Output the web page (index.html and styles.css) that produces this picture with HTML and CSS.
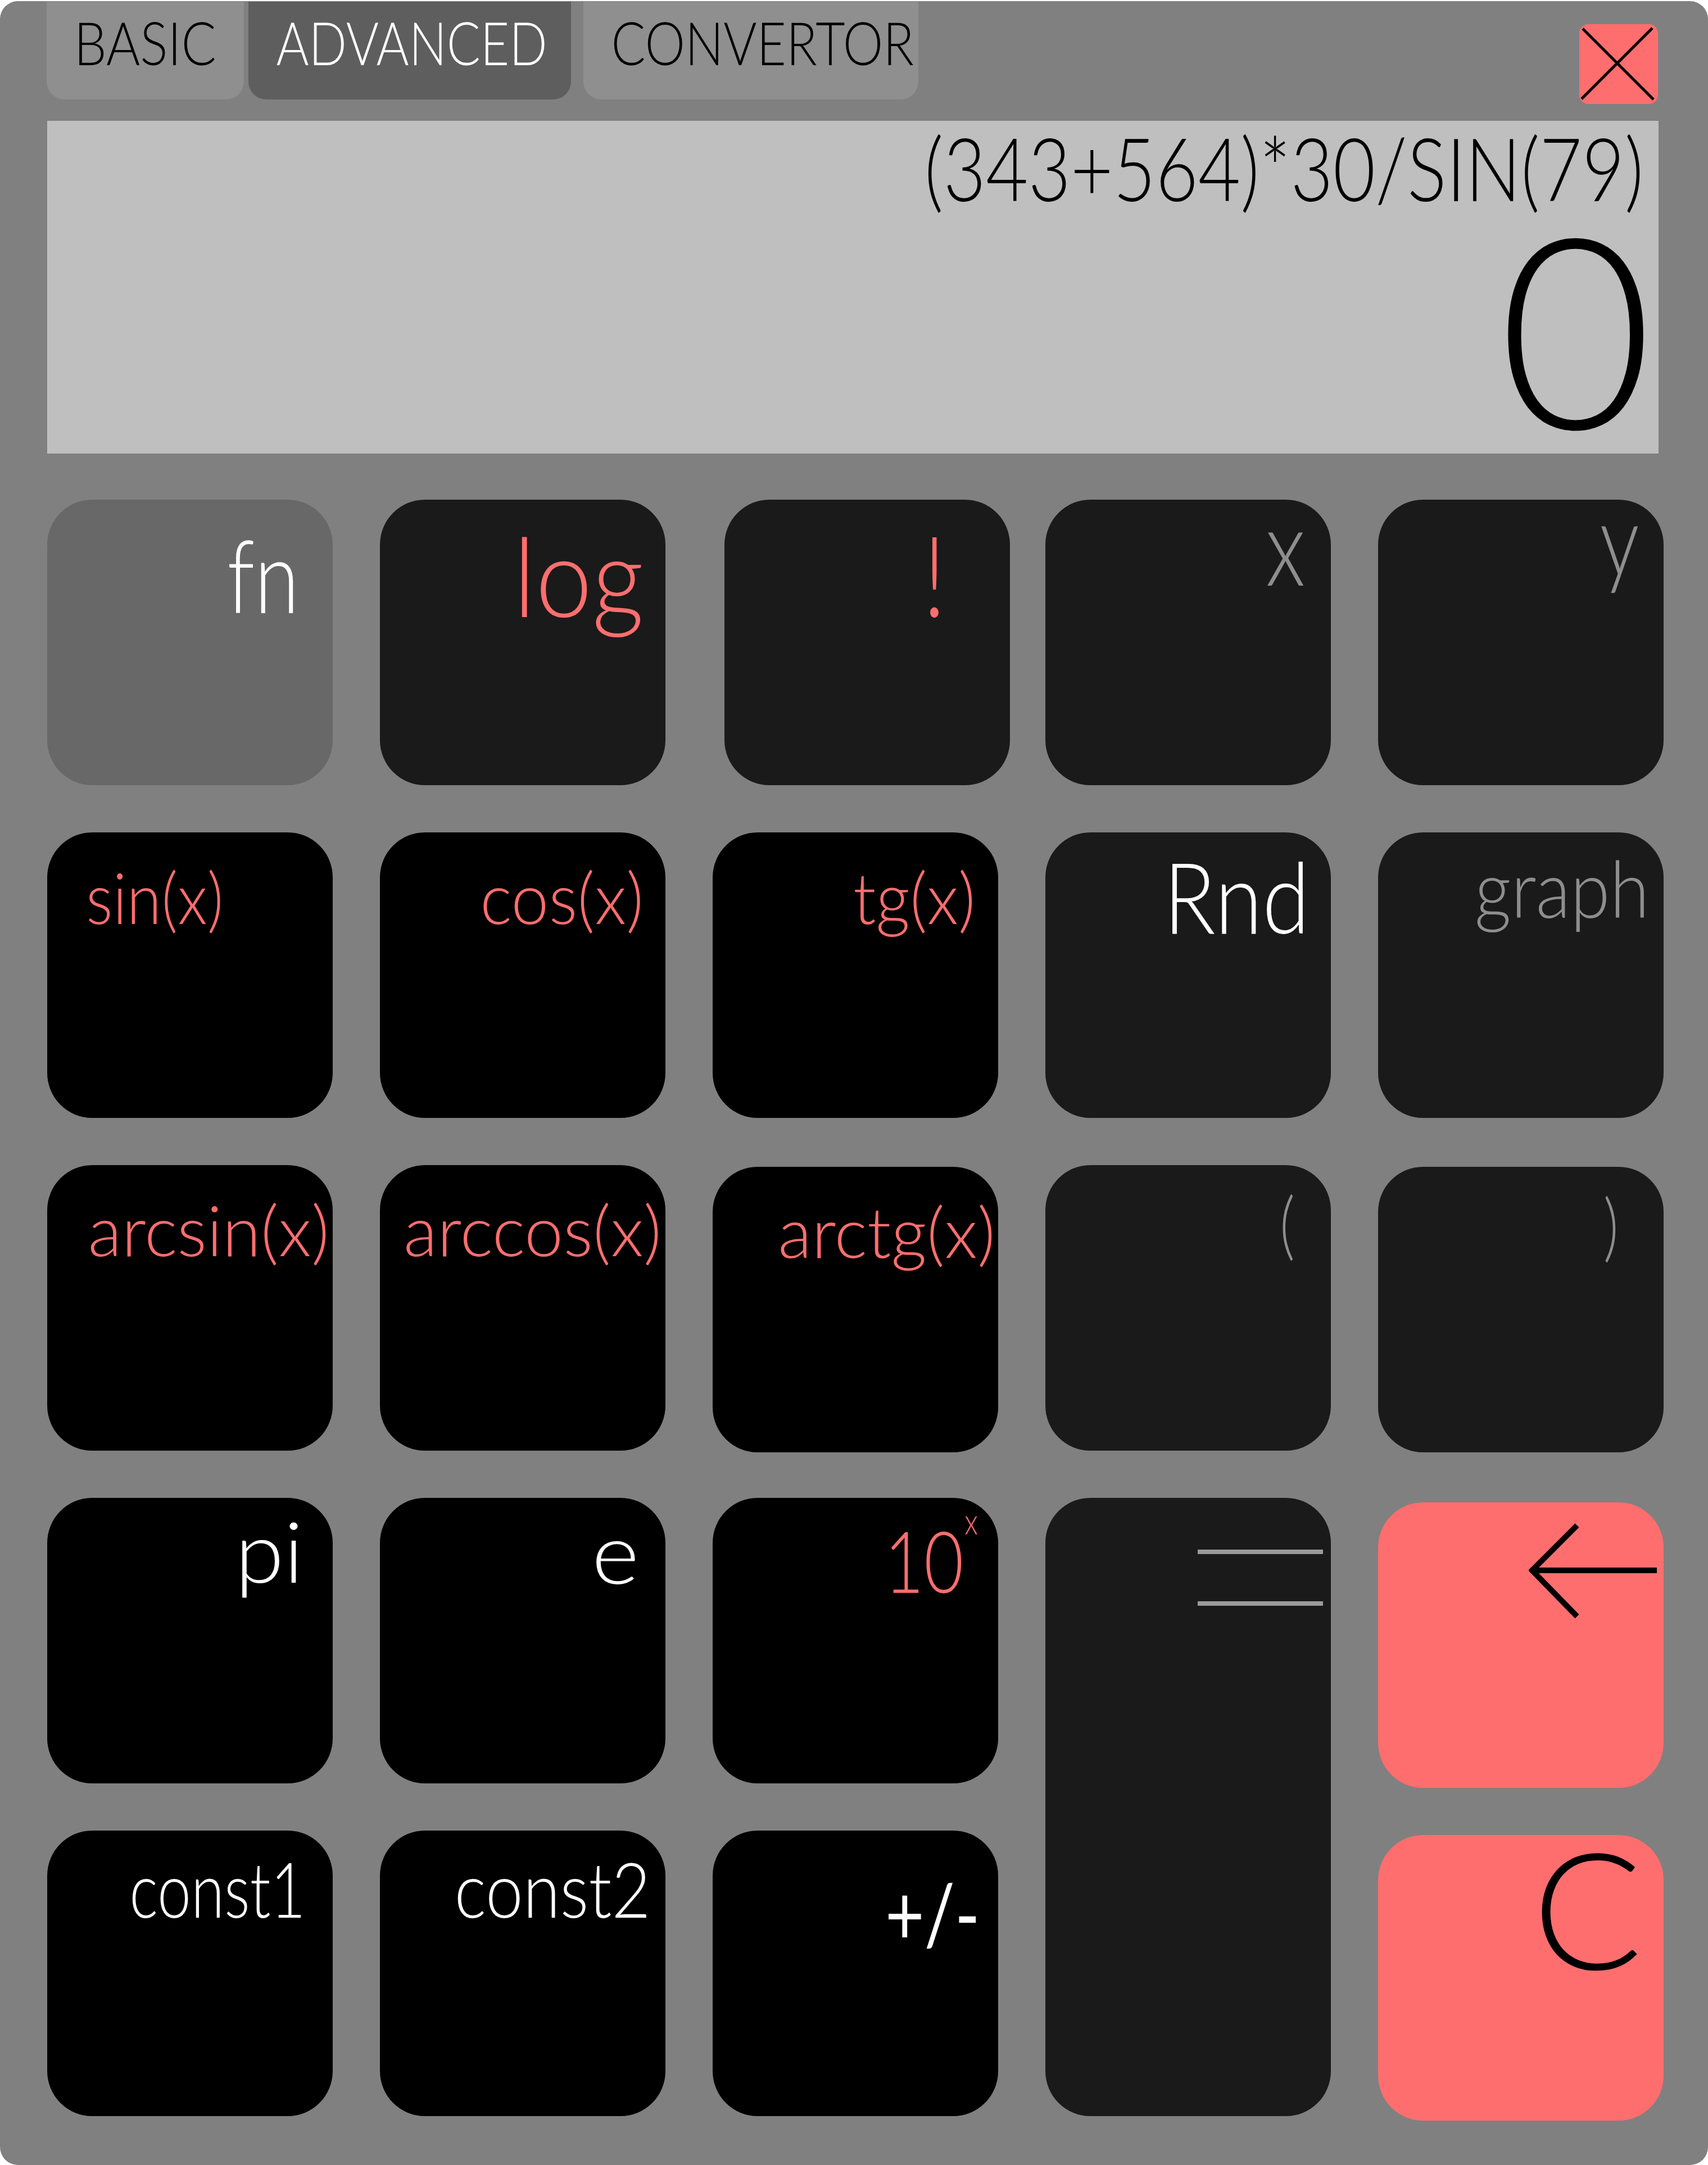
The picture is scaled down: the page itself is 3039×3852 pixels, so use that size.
FILE: index.html
```html
<!DOCTYPE html>
<html lang="en">
<head>
<meta charset="utf-8">
<title>Calculator - Advanced</title>
<link rel="stylesheet" href="styles.css">
</head>
<body>
<div class="calc">
  <div class="topbar">
    <div class="tabs">
      <div class="tab"><span class="tab-text">BASIC</span></div>
      <div class="tab tab-active"><span class="tab-text">ADVANCED</span></div>
      <div class="tab tab-wide"><span class="tab-text">CONVERTOR</span></div>
    </div>
    <div class="close">
      <svg class="close-x" viewBox="0 0 140 142" width="140" height="142">
        <line x1="6" y1="8" x2="132" y2="134"/>
        <line x1="130" y1="7" x2="4" y2="133"/>
      </svg>
    </div>
  </div>
  <div class="display">
    <div class="expr">(343+564)*30/SIN(79)</div>
    <div class="result">0</div>
  </div>
  <div class="keys">
    <div class="key k-fn"><span class="lbl t-white l-fn">fn</span></div>
    <div class="key k-dark"><span class="lbl t-red l-log">log</span></div>
    <div class="key k-dark k-bang"><span class="lbl t-red l-bang">!</span></div>
    <div class="key k-dark"><span class="lbl t-gray l-x">x</span></div>
    <div class="key k-dark"><span class="lbl t-gray l-y">y</span></div>

    <div class="key k-left"><span class="lbl lbl-left t-red l-sin">sin(x)</span></div>
    <div class="key"><span class="lbl t-red l-cos">cos(x)</span></div>
    <div class="key"><span class="lbl t-red l-tg">tg(x)</span></div>
    <div class="key k-dark"><span class="lbl t-white l-rnd">Rnd</span></div>
    <div class="key k-dark"><span class="lbl t-gray l-graph">graph</span></div>

    <div class="key"><span class="lbl t-red l-arcsin">arcsin(x)</span></div>
    <div class="key"><span class="lbl t-red l-arccos">arccos(x)</span></div>
    <div class="key k-low"><span class="lbl t-red l-arctg">arctg(x)</span></div>
    <div class="key k-dark"><span class="lbl t-gray l-lpar">(</span></div>
    <div class="key k-dark k-low"><span class="lbl t-gray l-rpar">)</span></div>

    <div class="key"><span class="lbl t-white l-pi">pi</span></div>
    <div class="key"><span class="lbl t-white l-e">e</span></div>
    <div class="key"><span class="lbl t-red l-ten">10<span class="sup">x</span></span></div>
    <div class="key k-dark k-eq"><div class="eq"></div></div>
    <div class="key k-red k-back">
      <svg class="back-arrow" viewBox="0 0 230 172" width="230" height="172">
        <line x1="4" y1="84" x2="228" y2="84"/>
        <polyline points="86,4 6,84 86,166"/>
      </svg>
    </div>

    <div class="key"><span class="lbl t-white l-c1">const1</span></div>
    <div class="key"><span class="lbl t-white l-c2">const2</span></div>
    <div class="key"><span class="lbl t-white l-pm">+/-</span></div>
    <div class="key k-red k-clear"><span class="lbl lbl-c l-c">C</span></div>
  </div>
</div>
</body>
</html>
```
FILE: styles.css
```css
* { box-sizing: border-box; }
html, body { margin: 0; padding: 0; background: #ffffff; }
body { font-family: Lato, "Open Sans", "DejaVu Sans", sans-serif; font-weight: 300; }

.calc {
  width: 3039px;
  height: 3850px;
  margin-top: 2px;
  background: #808080;
  border-radius: 32px;
  padding: 0 79px 0 84px;
  display: flex;
  flex-direction: column;
}

/* top bar */
.topbar { height: 213px; display: flex; align-items: flex-start; }
.tabs { display: flex; margin-left: -1px; margin-top: 1px; }
.tab {
  width: 351px;
  height: 174px;
  background: #8f8f8f;
  border-radius: 0 0 32px 32px;
  color: #000;
  font-size: 107px;
  line-height: 1;
  padding-top: 18px;
  text-align: center;
  white-space: nowrap;
}
.tab-active { width: 574px; margin-left: 8px; background: #5e5e5e; color: #fff; }
.tab-wide { width: 596px; margin-left: 22px; }
.tab-text { display: inline-block; transform: scaleX(0.86); }
.tab-active .tab-text { transform: scaleX(0.83); }
.tab-wide .tab-text { transform: scaleX(0.845); }

.close {
  margin-left: auto;
  margin-right: 10px;
  margin-top: 41px;
  width: 140px;
  height: 142px;
  background: #ff6e6e;
  border-radius: 16px;
}
.close-x { display: block; stroke: #000; stroke-width: 5; }

/* display */
.display {
  width: 2867px;
  height: 592px;
  background: #bfbfbf;
  display: flex;
  flex-direction: column;
  align-items: flex-end;
  padding: 5px 34px 0 0;
}
.expr {
  font-size: 156px;
  line-height: 1;
  font-weight: 300;
  white-space: nowrap;
  transform: scaleX(0.835);
  transform-origin: right top;
  margin-right: -7px;
  color: #000;
}
.result {
  font-size: 474px;
  line-height: 0.8;
  font-weight: 300;
  margin-top: 14px;
  margin-right: -24px;
  color: #000;
}

/* keypad */
.keys {
  margin-top: 82px;
  display: grid;
  grid-template-columns: repeat(5, 508px);
  grid-template-rows: repeat(5, 508px);
  gap: 84px;
}
.key {
  background: #000;
  border-radius: 80px;
  display: flex;
  justify-content: flex-end;
  align-items: flex-start;
}
.k-dark { background: #1a1a1a; }
.k-fn { background: #686868; }
.k-red { background: #ff6e6e; }
.k-left { justify-content: flex-start; }
.k-bang { margin-left: 21px; margin-right: -21px; }
.k-low { margin-top: 3px; margin-bottom: -3px; }
.k-eq { grid-column: 4; grid-row: 4 / span 2; }
.k-back { grid-column: 5; grid-row: 4; margin-top: 8px; margin-bottom: -8px; }
.k-clear { grid-column: 5; grid-row: 5; margin-top: 8px; margin-bottom: -8px; }

.lbl {
  display: inline-block;
  line-height: 1;
  white-space: nowrap;
  transform: scaleX(0.8);
  transform-origin: right top;
}
.lbl-left { transform-origin: left top; }

.t-white { color: #ffffff; }
.t-red { color: #ff6e6e; }
.t-gray { color: #8e8e8e; }

.l-fn { font-size: 180px; margin-top: 42px; margin-right: 60px; }
.l-log { font-size: 196px; margin-top: 36px; margin-right: 39px; transform: scaleX(0.92); }
.l-bang { font-size: 200px; margin-top: 32px; margin-right: 114px; }
.l-x { font-size: 189px; margin-top: -15px; margin-right: 45px; }
.l-y { font-size: 175px; margin-top: -20px; margin-right: 43px; }

.l-sin { font-size: 126px; margin-top: 52px; margin-left: 69px; transform: scaleX(0.89); }
.l-cos { font-size: 126px; margin-top: 52px; margin-right: 39px; transform: scaleX(0.95); }
.l-tg { font-size: 126px; margin-top: 52px; margin-right: 40px; transform: scaleX(0.94); }
.l-rnd { font-size: 176px; margin-top: 24px; margin-right: 38px; transform: scaleX(0.87); }
.l-graph { font-size: 140px; margin-top: 28px; margin-right: 26px; transform: scaleX(0.91); }

.l-arcsin { font-size: 124px; margin-top: 52px; margin-right: 6px; transform: none; }
.l-arccos { font-size: 124px; margin-top: 52px; margin-right: 7px; transform: none; }
.l-arctg { font-size: 124px; margin-top: 52px; margin-right: 5px; transform: none; }
.l-lpar { font-size: 132px; margin-top: 36px; margin-right: 64px; }
.l-rpar { font-size: 132px; margin-top: 36px; margin-right: 80px; }

.l-pi { font-size: 150px; margin-top: 18px; margin-right: 52px; transform: scaleX(1.05); }
.l-e { font-size: 150px; margin-top: 20px; margin-right: 47px; transform: scaleX(1.08); }
.l-ten { font-size: 152px; margin-top: 34px; margin-right: 36px; }
.sup { font-size: 63px; line-height: 0; vertical-align: 104px; margin-left: 2px; }

.l-c1 { font-size: 136px; margin-top: 35px; margin-right: 48px; transform: scaleX(0.79); }
.l-c2 { font-size: 136px; margin-top: 35px; margin-right: 26px; transform: scaleX(0.88); }
.l-pm { font-size: 150px; font-weight: 400; margin-top: 70px; margin-right: 32px; }
.l-c { font-size: 289px; margin-top: -17px; margin-right: 38px; color: #000; transform: none; }

.eq {
  width: 223px;
  height: 100px;
  margin-top: 92px;
  margin-right: 14px;
  border-top: 8px solid #9a9a9a;
  border-bottom: 8px solid #9a9a9a;
}
.back-arrow {
  display: block;
  margin-top: 37px;
  margin-right: 10px;
  fill: none;
  stroke: #000;
  stroke-width: 10;
}
```
